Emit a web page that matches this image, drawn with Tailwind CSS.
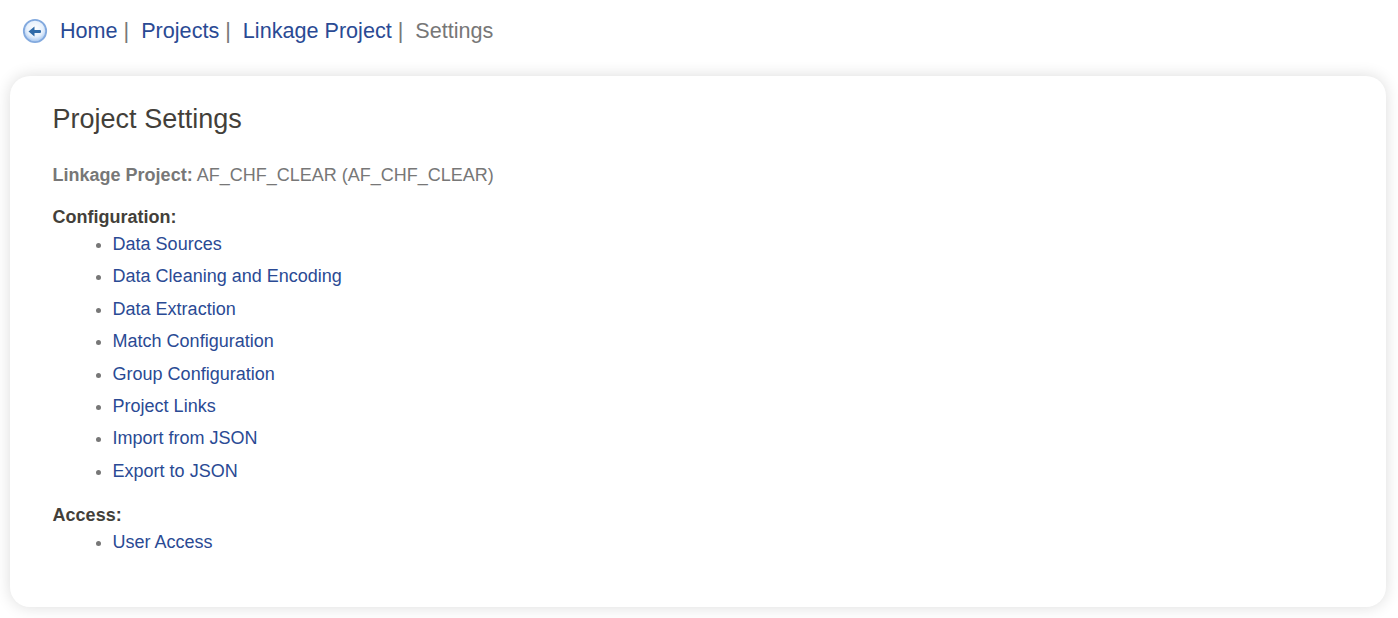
<!DOCTYPE html>
<html lang="en">
<head>
  <meta charset="UTF-8" />
  <title>Project Settings</title>
  <script src="https://cdn.jsdelivr.net/npm/@tailwindcss/browser@4"></script>
</head>
<body class="bg-white h-[618px] overflow-hidden font-['Liberation_Sans',Arial,sans-serif] text-[#777]">

  <!-- Breadcrumb -->
  <nav class="h-[76px] pl-[22px] pt-[18px] flex items-start text-[21.6px] leading-[25px]">
    <svg class="w-[26px] h-[26px] mr-[12px]" viewBox="0 0 26 26">
      <defs>
        <radialGradient id="back-fill" cx="50%" cy="40%" r="60%">
          <stop offset="0%" stop-color="#ffffff" />
          <stop offset="60%" stop-color="#e6f0fc" />
          <stop offset="100%" stop-color="#9fc2ee" />
        </radialGradient>
      </defs>
      <circle cx="13" cy="13" r="11.2" fill="url(#back-fill)" stroke="#82a9de" stroke-width="1.8" />
      <path d="M6.5 13.5 L12.5 8.5 L12.5 18.5 Z" fill="#2f6aa8" />
      <rect x="11" y="12" width="8" height="3" rx="1" fill="#2f6aa8" />
    </svg>
    <a href="#" class="text-[#2a4a94]">Home</a><span class="ml-[6px] mr-[12px]">|</span>
    <a href="#" class="text-[#2a4a94]">Projects</a><span class="ml-[6px] mr-[12px]">|</span>
    <a href="#" class="text-[#2a4a94]">Linkage Project</a><span class="ml-[6px] mr-[12px]">|</span>
    <span>Settings</span>
  </nav>

  <!-- Card -->
  <section class="mx-[10px] w-[1376px] h-[531px] bg-white rounded-[20px] shadow-[0_0_16px_rgba(0,0,0,0.14)] pl-[42.6px] pt-[27px]">
    <h1 class="text-[27px] leading-[32px] text-[#433f3a]">Project Settings</h1>

    <p class="mt-[27px] text-[18px] leading-[26px]"><b>Linkage Project:</b> AF_CHF_CLEAR (AF_CHF_CLEAR)</p>

    <h2 class="mt-[16px] text-[18px] leading-[26px] font-bold text-[#433f3a]">Configuration:</h2>
    <ul class="list-disc pl-[60px] text-[18px] leading-[26px] space-y-[6.4px] marker:text-[#777]">
      <li class="mt-[1px]"><a href="#" class="text-[#2a4a94]">Data Sources</a></li>
      <li><a href="#" class="text-[#2a4a94]">Data Cleaning and Encoding</a></li>
      <li><a href="#" class="text-[#2a4a94]">Data Extraction</a></li>
      <li><a href="#" class="text-[#2a4a94]">Match Configuration</a></li>
      <li><a href="#" class="text-[#2a4a94]">Group Configuration</a></li>
      <li><a href="#" class="text-[#2a4a94]">Project Links</a></li>
      <li><a href="#" class="text-[#2a4a94]">Import from JSON</a></li>
      <li><a href="#" class="text-[#2a4a94]">Export to JSON</a></li>
    </ul>

    <h2 class="mt-[18px] text-[18px] leading-[26px] font-bold text-[#433f3a]">Access:</h2>
    <ul class="list-disc pl-[60px] text-[18px] leading-[26px] marker:text-[#777]">
      <li class="mt-[1px]"><a href="#" class="text-[#2a4a94]">User Access</a></li>
    </ul>
  </section>

</body>
</html>
